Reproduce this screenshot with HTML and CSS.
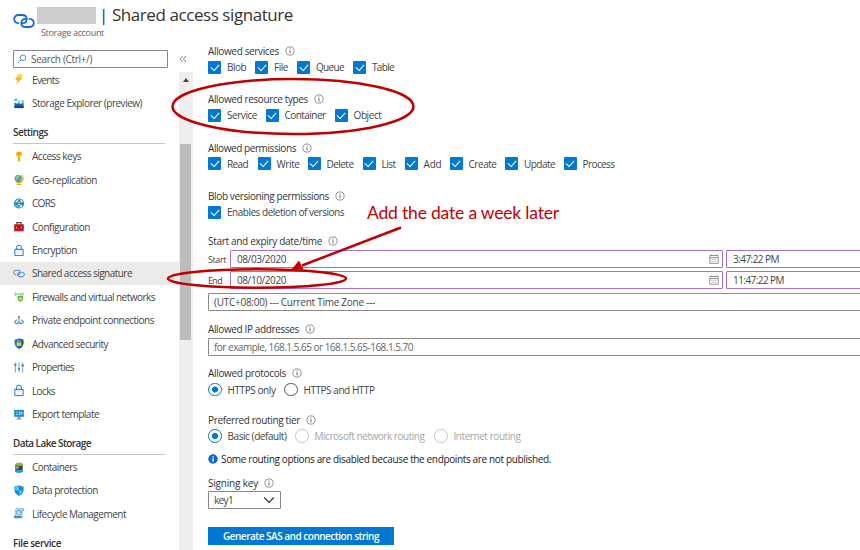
FILE: index.html
```html
<!DOCTYPE html>
<html lang="en">
<head>
<meta charset="utf-8">
<title>Shared access signature</title>
<link rel="stylesheet" href="styles.css">
</head>
<body>
<svg width="0" height="0" class="defs">
  <symbol id="info" viewBox="0 0 10 10"><circle cx="5" cy="5" r="4.1" fill="none" stroke="#777" stroke-width=".8"/><path d="M5 4.3v3M5 2.5v.9" stroke="#555" stroke-width=".9"/></symbol>
  <symbol id="link" viewBox="0 0 22 16"><g fill="none" stroke="currentColor" stroke-width="1.8" stroke-linecap="round"><path d="M5.200 10.200C2.700 9.800 1.200 8.300 1.200 6.300C1.200 3.800 3 2 5.800 2H9C12 2 13.700 3.800 13.700 6.200C13.700 8.500 12 10.200 9.500 10.200"/><path d="M16.500 5.800C19.300 6 20.800 7.500 20.800 9.800C20.800 12.300 19 14 16.200 14H12.800C10 14 8.300 12.300 8.300 9.900C8.300 7.600 10 5.900 12.300 5.900"/></g></symbol>
  <symbol id="lock" viewBox="0 0 12 14"><path d="M3.300 6V4C3.300 .4 8.700 .4 8.700 4V6" fill="none" stroke="#3c83e8" stroke-width="1.200"/><rect x="1.300" y="6" width="9.400" height="7" rx=".6" fill="#eef5ff" stroke="#3c83e8" stroke-width="1.200"/></symbol>
  <symbol id="cal" viewBox="0 0 10 10"><path d="M.8 1.500H9.200V9.300H.8ZM.8 3.600H9.200M2.500 .5V2M7.500 .5V2" fill="none" stroke="#888" stroke-width=".9"/><path d="M2.500 5.300H7.500M2.500 7.300H7.500" stroke="#999" stroke-width=".9" stroke-dasharray="1 .8"/></symbol>
</svg>
<div class="page">
  <header class="top">
    <svg class="logo" viewBox="0 0 22 16"><use href="#link"/></svg>
    <div class="titles">
      <div class="title-row"><span class="redacted"></span><h1 data-w="194">| Shared access signature</h1></div>
      <div class="subtitle"><span data-w="63">Storage account</span></div>
    </div>
  </header>
  <div class="body">
    <aside class="side">
      <div class="search"><svg viewBox="0 0 12 12"><circle cx="7.200" cy="4.600" r="3.300" fill="none" stroke="#3679c4"/><path d="M4.800 7L1.300 10.700" stroke="#3679c4" stroke-width="1.100"/></svg><span data-w="61">Search (Ctrl+/)</span></div>
      <nav>
        <a><svg viewBox="0 0 12 12"><path d="M5 .5H10L7.500 4.200H10.200L2.500 11.500L4.500 6.800H1.800Z" fill="#fbb911"/><path d="M5 .5H10L7.500 4.200H5Z" fill="#ffd34e"/></svg><span data-w="27">Events</span></a>
        <a><svg viewBox="0 0 12 12"><path d="M1 11V5L4.500 6.500V5L8 6.500L11 4.500V11Z" fill="#146ba8"/><path d="M1 8.500H11V11H1Z" fill="#0b5189"/><path d="M1 .8H4V3.300H1ZM5 3H7V5H5ZM9 2.500H11V4.500H9Z" fill="#31bbe0"/></svg><span data-w="110">Storage Explorer (preview)</span></a>
        <h2><span data-w="35">Settings</span></h2>
        <a><svg viewBox="0 0 12 12"><path d="M6 .5C10.400 .5 10 5.500 7.300 6.300V10.500L6 12L4.700 10.500V6.300C2 5.500 1.600 .5 6 .5Z" fill="#fcba13"/><circle cx="6" cy="2.500" r="1" fill="#c97b00"/><path d="M6 7V11" stroke="#df9000" stroke-width=".6"/></svg><span data-w="49">Access keys</span></a>
        <a><svg viewBox="0 0 12 12"><path d="M9 .8C12.500 5 10 10 3 9.500M6 9.500V11.500M3.500 11.500H8.500" fill="none" stroke="#eeb000" stroke-width="1.200"/><circle cx="5.300" cy="5" r="4" fill="#3c9bd9"/><path d="M2.500 3.500Q4 1 6.500 2L5.800 4L4 5V7L2.500 6ZM6.500 5L8.800 4.500L7.500 8Z" fill="#96d052"/></svg><span data-w="65">Geo-replication</span></a>
        <a><svg viewBox="0 0 12 12"><circle cx="6" cy="6" r="4.900" fill="#fff" stroke="#188bb5" stroke-width="1.300"/><path d="M3 6L6 3L9 6L6 9ZM6 3L3 9M9 6L10 9M3 6H9" fill="none" stroke="#188bb5"/><g fill="#188bb5"><circle cx="3" cy="6" r="1.500"/><circle cx="6.500" cy="3.300" r="1.300"/><circle cx="9" cy="6" r="1.500"/><circle cx="5.500" cy="8.800" r="1.300"/></g></svg><span data-w="23">CORS</span></a>
        <a><svg viewBox="0 0 12 12"><path d="M3.700 4V1.800H8.300V4" fill="none" stroke="#444" stroke-width="1.200"/><rect x=".8" y="3.500" width="10.400" height="7.800" fill="#c11920"/><path d="M.8 6.800H11.200" stroke="#701015"/><path d="M3 6.200H4V7.800H3ZM8 6.200H9V7.800H8Z" fill="#ddd"/></svg><span data-w="58">Configuration</span></a>
        <a><svg class="tall" viewBox="0 0 12 14"><use href="#lock"/></svg><span data-w="45">Encryption</span></a>
        <a class="active"><svg class="blue" viewBox="0 0 22 16"><use href="#link"/></svg><span data-w="100">Shared access signature</span></a>
        <a><svg viewBox="0 0 12 12"><path d="M3 1.500L1 3.500L3 5.500M9 1.500L11 3.500L9 5" fill="none" stroke="#369fd4"/><path d="M3 3.500H9" stroke="#61ae32" stroke-width="1.400" stroke-dasharray="1.400 .7"/><path d="M4.500 5.800L7.500 4.800L10.500 5.800V8.500Q10 11 7.500 11.800Q5 11 4.500 8.500Z" fill="#62b230"/><rect x="6.300" y="7.300" width="2.400" height="2" fill="#fff"/></svg><span data-w="123">Firewalls and virtual networks</span></a>
        <a><svg viewBox="0 0 12 12"><path d="M3.500 5L1 7.500L3.500 10M8.500 5L11 7.500L8.500 10" fill="none" stroke="#2f91d0" stroke-width="1.100"/><path d="M6 2V8" stroke="#569b36"/><circle cx="6" cy="2.300" r="1.200" fill="#569b36"/><path d="M4 8.800H8" stroke="#256caf" stroke-width="1.800" stroke-dasharray="1 .5"/></svg><span data-w="122">Private endpoint connections</span></a>
        <a><svg viewBox="0 0 12 12"><path d="M1.200 2L6 .5L10.800 2V6.500Q10 10 6 12Q2 10 1.200 6.500Z" fill="#1379cc"/><path d="M6 .5L10.800 2V6.500Q10 10 6 12Z" fill="#075da9"/><rect x="3.500" y="4.800" width="5" height="4" rx=".5" fill="#ffc522"/><path d="M4.500 5V3.600Q6 1.800 7.500 3.600V5" fill="none" stroke="#ffc522"/></svg><span data-w="76">Advanced security</span></a>
        <a><svg viewBox="0 0 12 12"><path d="M2 .5V11.500M6 .5V11.500M10 .5V11.500" stroke="#73a9cf" stroke-width="1.200"/><path d="M.7 3.200H3.300M4.700 7.500H7.300M8.700 3.800H11.300" stroke="#2277b5" stroke-width="1.400"/></svg><span data-w="42">Properties</span></a>
        <a><svg class="tall" viewBox="0 0 12 14"><use href="#lock"/></svg><span data-w="23">Locks</span></a>
        <a><svg viewBox="0 0 12 12"><rect x=".7" y="1" width="10.600" height="7.500" fill="#168bd1"/><path d="M4.500 8.500H7.500V10.500H9V11.500H3V10.500H4.500Z" fill="#87939b"/><path d="M2.500 3.500H5M2.500 6H5M6.500 2.500V7M7 4.500H9.800M8.200 3L9.800 4.500L8.200 6" stroke="#d4f4ff" stroke-width=".8" fill="none"/></svg><span data-w="67">Export template</span></a>
        <h2><span data-w="78">Data Lake Storage</span></h2>
        <a><svg viewBox="0 0 12 12"><path d="M2 3V10.500Q6 12.500 10 10.500V3Z" fill="#39414a"/><path d="M2 7.800Q6 9.500 10 7.800V10.500Q6 12.500 2 10.500Z" fill="#18a6cf"/><path d="M2 3.500L3 1L9 .5L10 3L8 4.500Z" fill="#84c51e"/><path d="M3 4.500H5.500V7.500H3Z" fill="#aaa"/></svg><span data-w="45">Containers</span></a>
        <a><svg viewBox="0 0 12 12"><path d="M1 1.700Q4 1.700 6 .4Q8 1.700 11 1.700V6Q10.500 9.500 6 12Q1.500 9.500 1 6Z" fill="#168bdb"/><path d="M1.800 2.500Q4.300 2.300 6 1.400V6H10Q9.500 8.500 6 10.800V6H1.800Z" fill="#55c8f2"/></svg><span data-w="66">Data protection</span></a>
        <a><svg viewBox="0 0 12 12"><path d="M3 .8H11V3H9.300V10.800H1V8.500H2.500V1.500Z" fill="#c9e3f5" stroke="#4f9dd4" stroke-width=".8"/><circle cx="6" cy="5" r="2.400" fill="#f6fbff" stroke="#4387c7" stroke-width=".9"/><path d="M6 3.500V5H7.300" stroke="#347abc" stroke-width=".7" fill="none"/><path d="M1 9.700H8.500" stroke="#2877bd" stroke-width="1.700"/></svg><span data-w="94">Lifecycle Management</span></a>
        <h2 class="last"><span data-w="48">File service</span></h2>
      </nav>
    </aside>
    <div class="rail">
      <svg class="collapse" viewBox="0 0 8 8"><path d="M3.700 1L1 4L3.700 7M7 1L4.300 4L7 7" fill="none" stroke="#666" stroke-width=".8"/></svg>
      <div class="track"><div class="arrow"></div><div class="thumb"></div></div>
    </div>
    <main>
      <div class="lab"><span data-w="71">Allowed services</span><svg><use href="#info"/></svg></div>
      <div class="opts services">
        <label><i class="cb"></i><span data-w="19">Blob</span></label><label><i class="cb"></i><span data-w="14">File</span></label><label><i class="cb"></i><span data-w="28">Queue</span></label><label><i class="cb"></i><span data-w="22">Table</span></label>
      </div>
      <div class="lab"><span data-w="100">Allowed resource types</span><svg><use href="#info"/></svg></div>
      <div class="opts types">
        <label><i class="cb"></i><span data-w="30">Service</span></label><label><i class="cb"></i><span data-w="41">Container</span></label><label><i class="cb"></i><span data-w="28">Object</span></label>
      </div>
      <div class="lab"><span data-w="88">Allowed permissions</span><svg><use href="#info"/></svg></div>
      <div class="opts perms">
        <label><i class="cb"></i><span data-w="21">Read</span></label><label><i class="cb"></i><span data-w="23">Write</span></label><label><i class="cb"></i><span data-w="27">Delete</span></label><label><i class="cb"></i><span data-w="14">List</span></label><label><i class="cb"></i><span data-w="18">Add</span></label><label><i class="cb"></i><span data-w="28">Create</span></label><label><i class="cb"></i><span data-w="31">Update</span></label><label><i class="cb"></i><span data-w="32">Process</span></label>
      </div>
      <div class="lab"><span data-w="121">Blob versioning permissions</span><svg><use href="#info"/></svg></div>
      <div class="opts single"><label><i class="cb"></i><span data-w="117">Enables deletion of versions</span></label></div>
      <div class="lab dates-lab"><span data-w="114">Start and expiry date/time</span><svg><use href="#info"/></svg></div>
      <div class="date"><span class="when"><span data-w="18">Start</span></span><div class="field"><span data-w="49">08/03/2020</span><svg><use href="#cal"/></svg></div><div class="field time"><span data-w="46">3:47:22 PM</span></div></div>
      <div class="date"><span class="when"><span data-w="14">End</span></span><div class="field"><span data-w="49">08/10/2020</span><svg><use href="#cal"/></svg></div><div class="field time"><span data-w="51">11:47:22 PM</span></div></div>
      <div class="box zone"><span data-w="161">(UTC+08:00) --- Current Time Zone ---</span></div>
      <div class="lab ip-lab"><span data-w="91">Allowed IP addresses</span><svg><use href="#info"/></svg></div>
      <div class="box ip"><span data-w="199">for example, 168.1.5.65 or 168.1.5.65-168.1.5.70</span></div>
      <div class="lab proto-lab"><span data-w="78">Allowed protocols</span><svg><use href="#info"/></svg></div>
      <div class="opts proto"><label><i class="rb on"></i><span data-w="48">HTTPS only</span></label><label><i class="rb"></i><span data-w="71">HTTPS and HTTP</span></label></div>
      <div class="lab tier-lab"><span data-w="92">Preferred routing tier</span><svg><use href="#info"/></svg></div>
      <div class="opts tier"><label><i class="rb on"></i><span data-w="59">Basic (default)</span></label><label class="off"><i class="rb"></i><span data-w="110">Microsoft network routing</span></label><label class="off"><i class="rb"></i><span data-w="67">Internet routing</span></label></div>
      <div class="note"><svg viewBox="0 0 10 10"><circle cx="5" cy="5" r="4.700" fill="#0b62d6"/><path d="M5 4.300V7.800M5 2.200V3.400" stroke="#fff" stroke-width="1.400"/></svg><span data-w="330">Some routing options are disabled because the endpoints are not published.</span></div>
      <div class="lab"><span data-w="50">Signing key</span><svg><use href="#info"/></svg></div>
      <div class="select"><span data-w="19">key1</span><svg viewBox="0 0 12 8"><path d="M1.200 1.500L6 6.300L10.800 1.500" fill="none" stroke="#333" stroke-width="1.200"/></svg></div>
      <div class="btn"><span data-w="156">Generate SAS and connection string</span></div>
    </main>
  </div>
  <div class="callout"><span data-w="192">Add the date a week later</span></div>
  <svg class="marks" viewBox="0 0 860 550">
    <g fill="none" stroke="#c00000" stroke-width="2.500"><ellipse cx="293" cy="106.500" rx="120.500" ry="27.500"/><ellipse cx="257" cy="278.500" rx="89" ry="9.300"/><path d="M401 227.500L302 265.500"/></g>
    <path d="M291.500 269.500L299 260.500L303.500 269.500Z" fill="#c00000"/>
  </svg>
</div>
<script src="fit.js"></script>
</body>
</html>
```
FILE: styles.css
```css
* { box-sizing: border-box; }
body { margin: 0; background: #fff; color: #444; font: 10px/14px "Open Sans", "Noto Sans", sans-serif; font-stretch: 90%; }
.defs { position: absolute; }
.page { position: relative; width: 860px; height: 550px; overflow: hidden; }
span[data-w], h1 { white-space: nowrap; }
.top { display: flex; height: 43px; padding: 5px 0 0 13px; }
.logo { width: 22px; height: 16px; margin: 8px 2px 0 0; color: #1767d2; }
.title-row { display: flex; align-items: center; height: 20px; gap: 3px; }
.redacted { width: 59px; height: 17px; background: #cdcdcd; }
h1 { margin: 0; font-size: 17px; line-height: 20px; font-weight: 400; color: #333; }
.subtitle { height: 15px; padding: 1px 0 0 4px; font-size: 9px; color: #666; }
.body { display: flex; height: 507px; }
.side { width: 179px; padding-top: 7px; }
.search { display: flex; align-items: center; width: 155px; height: 18px; margin-left: 13px; border: 1px solid #858585; border-radius: 1px; padding-left: 3px; color: #555; }
.search svg { width: 10px; height: 10px; margin-right: 4px; }
nav a { display: flex; align-items: center; height: 23.45px; padding-left: 13px; gap: 7px; }
nav a svg { width: 12px; height: 11px; flex: none; }
nav a svg.tall { height: 12.500px; }
.blue { color: #3477cf; }
nav .active { background: #edebe9; }
nav h2 { display: flex; align-items: center; width: 152px; height: 29.6px; margin: 0 0 0 13px; padding-top: 5px; border-bottom: 1px solid #c8c6c4; font-size: 10px; line-height: 14px; font-weight: 600; color: #333; }
nav h2.last { border: 0; height: 30px; }
.rail { width: 14px; padding-top: 12px; }
.collapse { display: block; width: 8px; height: 8px; margin-bottom: 9px; }
.track { height: 478px; background: #eeeeee; padding-top: 6px; }
.arrow { width: 0; height: 0; margin: 0 auto; border: solid transparent; border-width: 0 3px 4px; border-bottom-color: #444; }
.thumb { width: 11px; height: 196px; margin: 62px 0 0 1px; background: #bcbcbc; }
main { flex: 1; padding-left: 15px; overflow: hidden; }
.lab { display: flex; align-items: center; height: 16px; gap: 6px; font-weight: 500; color: #333; }
.lab svg { width: 10px; height: 10px; }
.opts { display: grid; height: 16.300px; align-items: center; margin-bottom: 16px; }
.services { grid-template-columns: 47px 42px 56px 60px; }
.types { grid-template-columns: 57.500px 69px 60px; }
.perms { grid-template-columns: 49.500px 50px 55px 42px 45px 55.500px 58.500px 60px; }
.single { grid-template-columns: 150px; }
.proto { grid-template-columns: 76px 100px; margin-bottom: 14px; }
.tier { grid-template-columns: 87px 139px 100px; margin-bottom: 6px; }
.opts label { display: flex; align-items: center; gap: 6px; }
.cb { width: 13px; height: 13px; background: #0078d4; border-radius: 1px; display: flex; align-items: center; justify-content: center; }
.cb::after { content: ""; width: 7px; height: 4px; border: solid #fff; border-width: 0 0 1px 1px; transform: translateY(-1px) rotate(-48deg); }
.rb { width: 13.500px; height: 13.500px; border: 1px solid #555; border-radius: 50%; }
.rb.on { border-color: #0078d4; background: radial-gradient(circle, #0078d4 0 2.800px, #fff 3.300px); }
.off { color: #a5a5a5; }
.off .rb { border-color: #c4c4c4; }
.dates-lab { margin-top: -3px; margin-bottom: 1px; }
.date { display: grid; grid-template-columns: 22px 493px 140px; column-gap: 0; height: 18px; margin-bottom: 2.500px; }
.when { display: flex; align-items: center; font-size: 9px; padding-top: 2px; }
.field { display: flex; align-items: center; justify-content: space-between; height: 18px; border: 1px solid #a970c8; border-radius: 1px; padding: 0 3px 0 6px; }
.field svg { width: 10px; height: 10px; }
.field.time { margin-left: 3px; }
.box { width: 665px; height: 18px; border: 1px solid #8c8987; border-radius: 1px; padding-left: 5px; display: flex; align-items: center; }
.zone { margin-top: 4.700px; }
.ip-lab { margin-top: 10px; }
.ip { margin-top: 1px; color: #666; }
.proto-lab { margin-top: 9px; }
.note { display: flex; align-items: center; height: 18px; gap: 3px; margin-bottom: 7px; color: #222; font-weight: 500; }
.note svg { width: 10px; height: 10px; }
.select { display: flex; align-items: center; justify-content: space-between; width: 73px; height: 18px; border: 1px solid #858585; border-radius: 1px; padding: 0 5px; }
.select svg { width: 12px; height: 8px; }
.btn { display: flex; align-items: center; justify-content: center; width: 186px; height: 18px; margin-top: 18.500px; background: #0078d4; color: #fff; font-weight: 600; }
.callout { position: absolute; left: 367px; top: 203px; font: 17.500px/20px Lato, sans-serif; color: #c00000; }
.marks { position: absolute; inset: 0; width: 860px; height: 550px; pointer-events: none; }
```
FILE: fit.js
```js
document.querySelectorAll('[data-w]').forEach(function (el) {
  var natural = el.getBoundingClientRect().width;
  var gap = (Number(el.dataset.w) - natural) / el.textContent.length;
  el.style.letterSpacing = gap.toFixed(3) + 'px';
});
```
